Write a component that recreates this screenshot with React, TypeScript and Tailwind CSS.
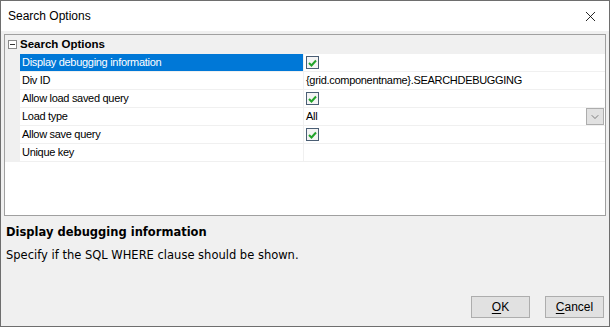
import { ChevronDown, X } from 'lucide-react';

type Row = { name: string; value?: string; check?: boolean; combo?: boolean };

const ROWS: Row[] = [
  { name: 'Display debugging information', check: true },
  { name: 'Div ID', value: '{grid.componentname}.SEARCHDEBUGGING' },
  { name: 'Allow load saved query', check: true },
  { name: 'Load type', value: 'All', combo: true },
  { name: 'Allow save query', check: true },
  { name: 'Unique key', value: '' },
];

const CheckBox = () => (
  <div className="w-[13px] h-[13px] border border-[#4a5e74] bg-[#f4f4f4] flex items-center justify-center">
    <svg width="9" height="8" viewBox="0 0 9 8">
      <path d="M1 4 L3.5 6.5 L8 1.5" fill="none" stroke="#22a32a" strokeWidth="2" />
    </svg>
  </div>
);

export default function App() {
  return (
    <div
      className="w-[610px] h-[327px] border border-[#6e6e6e] bg-[#f0f0f0] flex flex-col text-black"
      style={{ fontFamily: '"Liberation Sans", Arial, sans-serif' }}
    >
      {/* title bar */}
      <div className="h-[30px] bg-white flex items-center justify-between pl-[7px] pr-[10px] shrink-0">
        <span className="text-[12px]">Search Options</span>
        <X size={17} strokeWidth={1.2} />
      </div>

      {/* property grid */}
      <div className="mt-[3px] ml-[3px] w-[602px] h-[182px] border border-[#a0a0a0] bg-white flex flex-col shrink-0 text-[11px] tracking-[-0.3px]">
        <div className="h-[19px] bg-[#f0f0f0] flex items-center shrink-0">
          <div className="w-[15px] flex items-center justify-center">
            <div className="w-[9px] h-[9px] border border-[#8a8a8a] bg-white flex items-center justify-center">
              <div className="w-[5px] h-px bg-[#333]" />
            </div>
          </div>
          <span className="font-bold text-[11.5px] tracking-normal">Search Options</span>
        </div>
        {ROWS.map((r, i) => (
          <div key={r.name} className="h-[18px] flex shrink-0">
            <div className="w-[15px] bg-[#f0f0f0] shrink-0" />
            <div
              className={
                i === 0
                  ? 'w-[283px] bg-[#0078d7] text-white pl-[2px] flex items-center border-b border-[#f0f0f0]'
                  : 'w-[283px] pl-[2px] flex items-center border-b border-[#f0f0f0]'
              }
            >
              {r.name}
            </div>
            <div className="w-px bg-[#f0f0f0]" />
            <div className="flex-1 flex items-center pl-[2px] border-b border-[#f0f0f0] pr-px">
              {r.check && <CheckBox />}
              {r.value !== undefined && <span className="flex-1">{r.value}</span>}
              {r.combo && (
                <div className="w-[18px] h-[17px] bg-[#e1e1e1] border border-[#adadad] flex items-center justify-center">
                  <ChevronDown size={12} strokeWidth={1.3} color="#444" />
                </div>
              )}
            </div>
          </div>
        ))}
        <div className="flex-1" />
      </div>

      {/* description */}
      <div className="pl-[5px] pt-[9px]" style={{ fontFamily: '"DejaVu Sans", Verdana, sans-serif' }}>
        <div className="text-[11.5px] font-bold leading-[14px]">Display debugging information</div>
        <div className="text-[11.5px] leading-[14px] mt-[9px]">Specify if the SQL WHERE clause should be shown.</div>
      </div>

      {/* buttons */}
      <div className="flex-1" />
      <div className="flex justify-end gap-[15px] pr-[5px] pb-[8px] text-[12px]">
        <button className="w-[59px] h-[22px] bg-[#e1e1e1] border border-[#adadad]">
          <span className="underline underline-offset-2">O</span>K
        </button>
        <button className="w-[59px] h-[22px] bg-[#e1e1e1] border border-[#adadad]">
          <span className="underline underline-offset-2">C</span>ancel
        </button>
      </div>
    </div>
  );
}
